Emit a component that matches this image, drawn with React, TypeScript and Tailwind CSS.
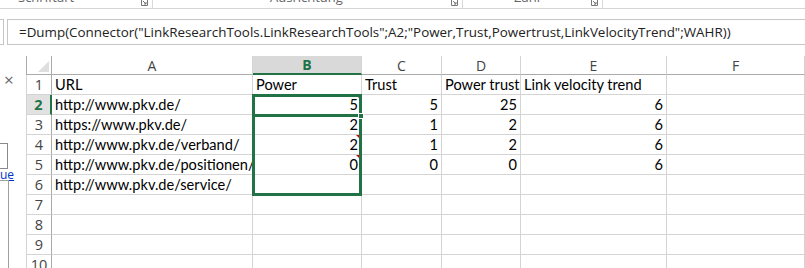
import type { ReactNode } from "react";

const cols = [
  { key: "A", w: "w-[201px]" },
  { key: "B", w: "w-[109px]" },
  { key: "C", w: "w-[80px]" },
  { key: "D", w: "w-[79px]" },
  { key: "E", w: "w-[146px]" },
  { key: "F", w: "flex-1" },
];

type Cell = string | number | undefined;

const rows: Cell[][] = [
  ["URL", "Power", "Trust", "Power trust", "Link velocity trend"],
  ["http://www.pkv.de/", 5, 5, 25, 6],
  ["https://www.pkv.de/", 2, 1, 2, 6],
  ["http://www.pkv.de/verband/", 2, 1, 2, 6],
  ["http://www.pkv.de/positionen/", 0, 0, 0, 6],
  ["http://www.pkv.de/service/"],
  [],
  [],
  [],
  [],
];

function Launcher() {
  return (
    <svg width="7" height="7" viewBox="0 0 7 7" className="text-[#777]">
      <path d="M0.5 0.5 V6.5 H6.5 V0.5" fill="none" stroke="currentColor" />
      <path d="M2 2 L5 5 M3 5 H5 V3" fill="none" stroke="currentColor" />
    </svg>
  );
}

function RibbonGroup({
  label,
  width,
  labelPad,
}: {
  label: string;
  width: string;
  labelPad: string;
}) {
  return (
    <div className={`relative flex h-full shrink-0 items-end ${width}`}>
      <span
        className={`absolute bottom-[4px] ${labelPad} text-[13px] leading-none text-[#666]`}
      >
        {label}
      </span>
      <span className="absolute bottom-[2px] right-[5px]">
        <Launcher />
      </span>
      <span className="absolute right-0 top-0 h-full w-px bg-[#d9d9d9]" />
    </div>
  );
}

function HeaderCell({ children, w, active }: { children: ReactNode; w: string; active?: boolean }) {
  return (
    <div
      className={`flex h-full shrink-0 items-center justify-center border-r border-[#d4d4d4] text-[14px] ${w} ${
        active
          ? "border-b-2 border-b-[#217346] bg-[#d9d9d9] font-bold text-[#217346]"
          : "border-b border-b-[#ababab] text-[#444]"
      }`}
    >
      {children}
    </div>
  );
}

export default function App() {
  return (
    <div
      className="relative h-[268px] w-[805px] overflow-hidden bg-white text-black"
      style={{ fontFamily: '"Open Sans", "Noto Sans", sans-serif' }}
    >
      {/* ribbon bottom */}
      <div className="flex h-[9px] border-b border-[#d5d5d5]">
        <RibbonGroup label="Schriftart" width="w-[153px]" labelPad="left-[18px]" />
        <RibbonGroup label="Ausrichtung" width="w-[310px]" labelPad="left-[117px]" />
        <RibbonGroup label="Zahl" width="w-[140px]" labelPad="left-[51px]" />
      </div>

      {/* formula bar */}
      <div className="mt-[10px] flex h-[26px]">
        <div className="h-full w-[4px] border-y border-r border-[#c6c6c6]" />
        <div className="ml-[3px] flex h-full flex-1 items-center whitespace-nowrap border-y border-l border-[#c6c6c6] pl-[11px] text-[13.4px] text-[#222]">
          =Dump(Connector("LinkResearchTools.LinkResearchTools";A2;"Power,Trust,Powertrust,LinkVelocityTrend";WAHR))
        </div>
      </div>

      <div className="mt-[11px] flex">
        {/* task pane edge */}
        <div className="relative h-[213px] w-[26px] shrink-0">
          <span className="absolute left-[4px] top-[15px] text-[17px] leading-none text-[#666]">×</span>
          <div className="absolute left-[-2px] top-[87px] h-[26px] w-[10px] border border-[#8a8a8a]" />
          <span className="absolute left-0 top-[113px] text-[12px] leading-none text-[#0033cc] underline">
            ue
          </span>
          <div className="absolute left-[-2px] top-[124px] h-[120px] w-[11px] border-r border-t border-[#a0a0a0]" />
        </div>

        {/* sheet */}
        <div className="relative flex-1">
          <div className="flex h-[19px]">
            <div className="relative h-full w-[26px] shrink-0 border-b border-l border-r border-[#ababab]">
              <svg className="absolute bottom-[2px] right-[2px]" width="11" height="11" viewBox="0 0 11 11">
                <path d="M11 0 V11 H0 Z" fill="#dfdfdf" />
              </svg>
            </div>
            {cols.map((c) => (
              <HeaderCell key={c.key} w={c.w} active={c.key === "B"}>
                {c.key}
              </HeaderCell>
            ))}
          </div>

          {rows.map((r, i) => {
            const n = i + 1;
            const active = n === 2;
            return (
              <div key={n} className="flex h-[20px]">
                <div
                  className={`flex h-full w-[26px] shrink-0 items-center justify-center border-b border-l border-[#d4d4d4] text-[14.5px] ${
                    active
                      ? "border-r-2 border-r-[#217346] bg-[#e1e1e1] font-bold text-[#217346]"
                      : "border-r border-r-[#ababab] text-[#444]"
                  }`}
                >
                  {n}
                </div>
                {cols.map((c, j) => {
                  const v = r[j];
                  const isNum = typeof v === "number";
                  const flag = j === 1 && isNum;
                  return (
                    <div
                      key={c.key}
                      className={`relative flex h-full shrink-0 items-center overflow-hidden whitespace-nowrap border-b border-r border-[#d4d4d4] px-[3px] font-[Lato,sans-serif] text-[14.6px] ${
                        c.w
                      } ${isNum ? "justify-end" : "justify-start"}`}
                    >
                      {v}
                      {flag && (
                        <span className="absolute right-0 top-0 h-0 w-0 border-l-[5px] border-t-[5px] border-l-transparent border-t-[#e00000]" />
                      )}
                    </div>
                  );
                })}
              </div>
            );
          })}

          {/* selection */}
          <div className="pointer-events-none absolute left-[226px] top-[38px] h-[102px] w-[110px] border-[3px] border-[#217346]" />
          <div className="pointer-events-none absolute left-[226px] top-[58px] h-[3px] w-[110px] bg-[#217346]" />
          <div className="pointer-events-none absolute left-[332px] top-[57px] h-[6px] w-[6px] border border-white bg-[#217346]" />
        </div>
      </div>
    </div>
  );
}
